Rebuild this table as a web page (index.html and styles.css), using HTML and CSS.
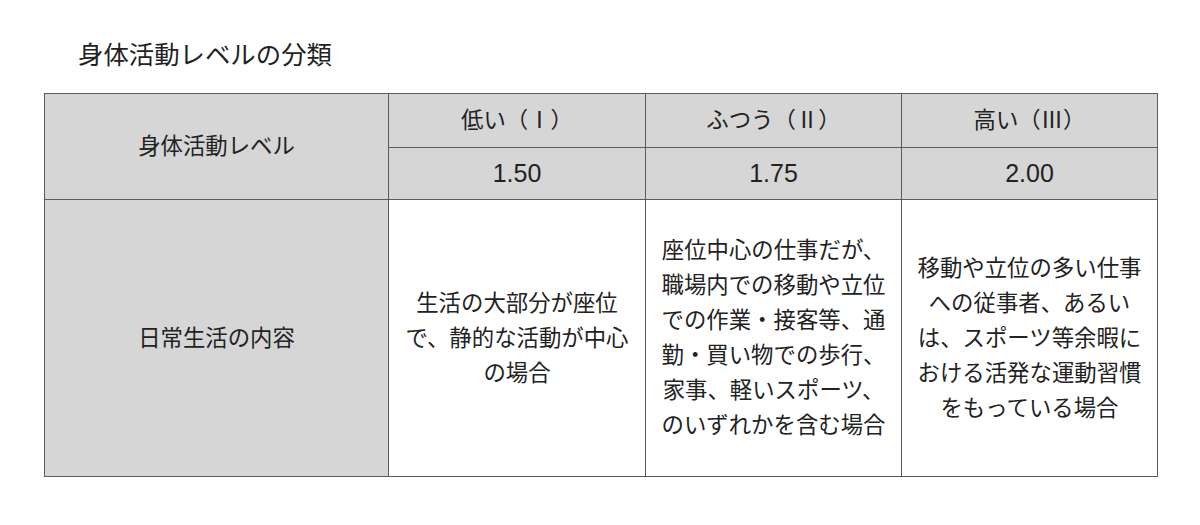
FILE: index.html
```html
<!DOCTYPE html>
<html lang="ja">
<head>
<meta charset="utf-8">
<title>身体活動レベルの分類</title>
<link rel="stylesheet" href="styles.css">
</head>
<body>
<div class="page">
  <h1 class="title">身体活動レベルの分類</h1>
  <table class="pal">
    <colgroup>
      <col class="c1"><col class="c2"><col class="c3"><col class="c4">
    </colgroup>
    <tr class="r1">
      <th rowspan="2" class="label">身体活動レベル</th>
      <th>低い（Ⅰ）</th>
      <th>ふつう（Ⅱ）</th>
      <th>高い（Ⅲ）</th>
    </tr>
    <tr class="r2">
      <th class="num">1.50</th>
      <th class="num">1.75</th>
      <th class="num">2.00</th>
    </tr>
    <tr class="r3">
      <th class="label">日常生活の内容</th>
      <td>生活の大部分が座位で、静的な活動が中心の場合</td>
      <td>座位中心の仕事だが、職場内での移動や立位での作業・接客等、通勤・買い物での歩行、家事、軽いスポーツ、のいずれかを含む場合</td>
      <td>移動や立位の多い仕事への従事者、あるいは、スポーツ等余暇における活発な運動習慣をもっている場合</td>
    </tr>
  </table>
</div>
</body>
</html>
```
FILE: styles.css
```css
html, body {
  margin: 0;
  padding: 0;
  background: #ffffff;
}
body {
  font-family: "Liberation Sans", "Noto Sans CJK JP", sans-serif;
  color: #222222;
}
.page {
  padding: 40px 0 0 44px;
}
.title {
  margin: 0 0 23px 34px;
  font-size: 25.4px;
  font-weight: normal;
  line-height: 30px;
  height: 30px;
}
.pal {
  border-collapse: collapse;
  table-layout: fixed;
  width: 1113px;
  border: 1px solid #7a7a7a;
}
.c1 { width: 344px; }
.c2 { width: 257px; }
.c3 { width: 256px; }
.c4 { width: 256px; }
.pal th, .pal td {
  border: 1px solid #5a5a5a;
  font-size: 22.4px;
  font-weight: normal;
  line-height: 35px;
  padding: 0 13px;
  text-align: center;
  vertical-align: middle;
  word-break: normal;
  line-break: strict;
}
.pal th {
  background: #d6d6d6;
}
.pal th.num {
  font-size: 25px;
}
.pal td {
  background: #ffffff;
}
.r1 { height: 54px; }
.r2 { height: 52px; }
.r3 { height: 277px; }
```
